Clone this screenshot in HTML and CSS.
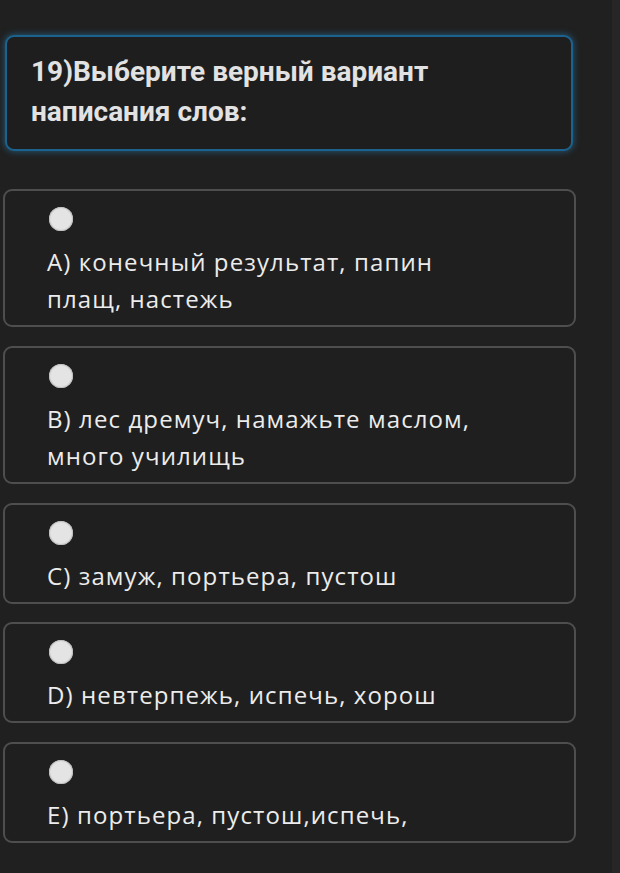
FILE: index.html
```html
<!DOCTYPE html>
<html lang="ru">
<head>
<meta charset="utf-8">
<link rel="stylesheet" href="styles.css">
</head>
<body>
<div class="page">
  <div class="question">19)Выберите верный вариант написания слов:</div>
  <div class="options">
    <div class="option"><span class="radio"></span><div class="label">А) конечный результат, папин плащ, настежь</div></div>
    <div class="option"><span class="radio"></span><div class="label">В) лес дремуч, намажьте маслом, много училищь</div></div>
    <div class="option"><span class="radio"></span><div class="label">С) замуж, портьера, пустош</div></div>
    <div class="option"><span class="radio"></span><div class="label">D) невтерпежь, испечь, хорош</div></div>
    <div class="option"><span class="radio"></span><div class="label">Е) портьера, пустош,испечь,</div></div>
  </div>
</div>
</body>
</html>
```

FILE: styles.css
```css
html, body {
  margin: 0;
  padding: 0;
  background: #202020;
}
body {
  width: 620px;
  height: 873px;
  overflow: hidden;
}
.page {
  width: 609px;
  height: 838px;
  background: #202020;
  border-right: 8px solid #262626;
  padding: 35px 0 0 3px;
  box-sizing: content-box;
}
.question {
  width: 520px;
  margin-left: 2px;
  padding: 15px 20px 17px 24px;
  border: 2px solid #1c628f;
  border-radius: 9px;
  background: #1e1e1e;
  box-shadow: 0 0 6px 1px rgba(40, 120, 170, 0.55);
  color: #e2e2e2;
  font-family: Roboto, "Liberation Sans", sans-serif;
  font-weight: 700;
  font-size: 28px;
  line-height: 40px;
  box-sizing: content-box;
}
.options {
  margin-top: 38px;
  display: flex;
  flex-direction: column;
  gap: 18.75px;
  width: 573px;
}
.option {
  border: 2px solid #4e4e4e;
  border-radius: 9px;
  background: #1f1f1f;
  padding: 16px 20px 8px 42px;
  display: flex;
  flex-direction: column;
  align-items: flex-start;
}
.radio {
  width: 24px;
  height: 24px;
  border-radius: 50%;
  background: #e4e4e4;
  box-shadow: inset 0 0 1px 1px #bdbdbd;
  margin-left: 2px;
  margin-bottom: 12px;
}
.label {
  color: #ececec;
  font-family: "Open Sans", "Noto Sans", sans-serif;
  font-size: 24px;
  letter-spacing: 1.1px;
  line-height: 37px;
  max-width: 440px;
}
```
